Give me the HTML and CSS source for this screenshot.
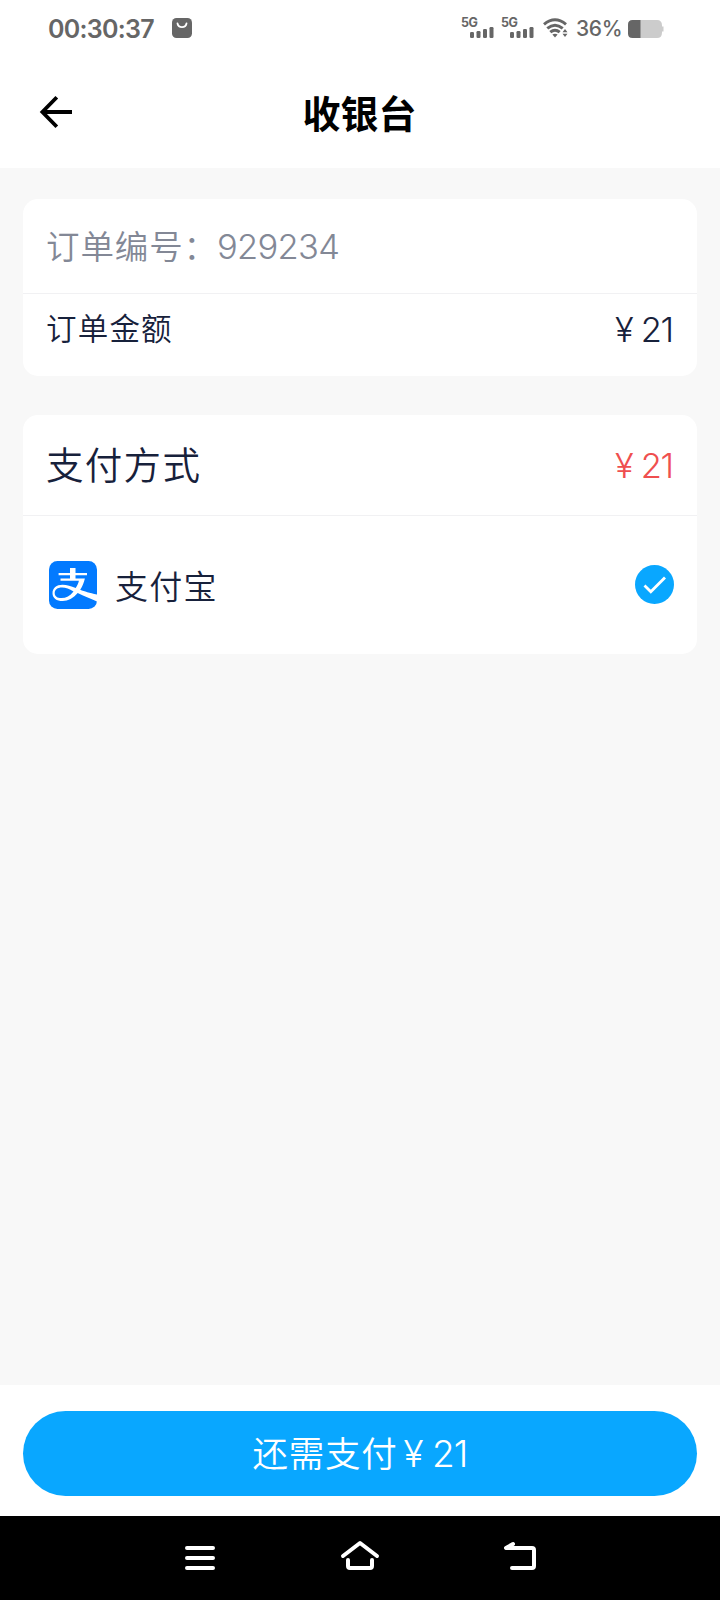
FILE: index.html
```html
<!DOCTYPE html>
<html lang="zh-CN">
<head>
    <meta charset="UTF-8">
    <title>收银台</title>
    <link rel="stylesheet" href="styles.css">
</head>
<body>
    <div class="page">
        <div class="status">
            <span class="time">00:30:37</span>
            <svg class="bag" width="20" height="20" viewBox="0 0 20 20">
                <rect width="20" height="20" rx="4.5" fill="#666"/>
                <path d="M5.5 5.5a4.6 4.6 0 0 0 9 0" fill="none" stroke="#fff" stroke-width="1.8" stroke-linecap="round"/>
            </svg>
            <div class="signal">
                <span>5G</span>
                <svg width="24" height="12" viewBox="0 0 24 12" fill="#666">
                    <rect x="0" y="6" width="4" height="6" rx="1.2"/>
                    <rect x="6.5" y="5" width="4" height="7" rx="1.2"/>
                    <rect x="13" y="3" width="4" height="9" rx="1.2"/>
                    <rect x="19.5" y="1" width="4" height="11" rx="1.2"/>
                </svg>
            </div>
            <div class="signal">
                <span>5G</span>
                <svg width="24" height="12" viewBox="0 0 24 12" fill="#666">
                    <rect x="0" y="6" width="4" height="6" rx="1.2"/>
                    <rect x="6.5" y="5" width="4" height="7" rx="1.2"/>
                    <rect x="13" y="3" width="4" height="9" rx="1.2"/>
                    <rect x="19.5" y="1" width="4" height="11" rx="1.2"/>
                </svg>
            </div>
            <svg class="wifi" width="26" height="20" viewBox="0 0 26 20">
                <g fill="none" stroke="#666" stroke-width="3">
                    <path d="M1 6.3Q12 -2.7 23 6.3"/>
                    <path d="M4.3 10.4Q12 4 19.7 10.4"/>
                    <path d="M7.3 14.2Q12 10.2 16.7 14.2"/>
                </g>
                <path d="M9.4 16.6Q12 14.8 14.6 16.6L12 19.4Z" fill="#666"/>
                <path d="M19.5 14.3L22 11l2.5 3.3zM19.5 15.7h5L22 19z" fill="#666"/>
            </svg>
            <span class="percent">36%</span>
            <svg class="battery" width="36" height="18" viewBox="0 0 36 18">
                <path d="M4.5 0H29q5 0 5 5.5v1h1.500v5H34v1q0 5.500-5 5.500H4.500z" fill="#ccc"/>
                <path d="M12.500 0H4.500Q0 0 0 4.500v9Q0 18 4.500 18h8z" fill="#666"/>
            </svg>
        </div>
        <div class="header">
            <svg class="back" width="34" height="34" viewBox="0 0 34 34" fill="none" stroke="#000" stroke-width="3.8">
                <path d="M33 17H4M17.800 2.200L3.400 17l14.400 14.800"/>
            </svg>
            <h1>收银台</h1>
        </div>

        <div class="content">
            <div class="card order">
                <div class="row number">
                    <span class="no-label">订单编号：</span><span class="no-value">929234</span>
                </div>
                <div class="row amount">
                    <span class="amount-label">订单金额</span>
                    <span class="price"><i>¥</i>21</span>
                </div>
            </div>
            <div class="card pay">
                <div class="row method">
                    <span class="method-label">支付方式</span>
                    <span class="price red"><i>¥</i>21</span>
                </div>
                <div class="row alipay">
                    <svg class="logo" width="48" height="48" viewBox="0 0 48 48">
                        <rect width="48" height="48" rx="8.500" fill="#027aff"/>
                        <path d="M21 7h5.500v5H38v2.200H26.500v3.400h9.400c-1 4.300-2.500 8-4.700 11.200 4.500 1.700 9 3.100 16.800 4.800v6.800c-7-2.500-13-5.300-19.300-8.300-4.500 5.200-9.500 8-15 8C7.500 40.100 3.500 37 3.500 32.200c0-5 4-8.400 10-8.400 4.500 0 8.500 1.300 13.200 3.200 1.500-2.200 2.600-4.500 3.200-7.200H11.500v-2.200H21v-3.400H9.600V12H21zM13 26.400c-4.500 0-7.300 2.100-7.300 5.500 0 3.200 2.500 5.200 6.800 5.200 4.600 0 8.500-2.300 12-6.700-4.200-2.500-7.500-4-11.500-4z" fill="#fff"/>
                    </svg>
                    <span class="alipay-label">支付宝</span>
                    <svg class="check" width="39" height="39" viewBox="0 0 39 39">
                        <circle cx="19.500" cy="19.500" r="19.500" fill="#09a7ff"/>
                        <path d="M9.500 20.500l6.300 6.300L30 12.400" fill="none" stroke="#fff" stroke-width="2.800"/>
                    </svg>
                </div>
            </div>
        </div>

        <div class="footer">
            <div class="btn"><span>还需支付</span><i>¥</i><b>21</b></div>
        </div>
        <div class="nav">
            <svg width="36" height="32" viewBox="0 0 36 32" fill="none" stroke="#fff" stroke-width="4" stroke-linecap="round">
                <path d="M5 8h26M5 18h26M5 28h26"/>
            </svg>
            <svg width="40" height="32" viewBox="0 0 40 32" fill="none" stroke="#fff" stroke-width="4" stroke-linecap="round" stroke-linejoin="round">
                <path d="M3 16L20 3l17 13M8 20v6q0 2 2 2h20q2 0 2-2v-6"/>
            </svg>
            <svg width="36" height="32" viewBox="0 0 36 32" fill="none" stroke="#fff" stroke-width="4" stroke-linecap="round" stroke-linejoin="round">
                <path d="M11 4L4 8h26q2 0 2 2v16q0 2-2 2H10"/>
            </svg>
        </div>
    </div>
</body>
</html>
```
FILE: styles.css
```css
*{
    padding: 0;
    margin: 0;
    box-sizing: border-box;
}

body{
    font-family: Inter, "Noto Sans CJK SC", sans-serif;
    color: #17213b;
    background: #fff;
}

i{
    font-style: normal;
}

svg{
    display: block;
    flex: none;
}

.page{
    display: flex;
    flex-direction: column;
    width: 720px;
    height: 1600px;
    overflow: hidden;
}

/* 状态栏 */
.status{
    display: flex;
    align-items: center;
    height: 56px;
    padding: 0 56px 0 48px;
    color: #666;
}

.time{
    width: 107px;
    font-size: 25px;
    font-weight: 600;
    line-height: 30px;
    letter-spacing: -0.7px;
    white-space: nowrap;
    margin-top: 2px;
}

.bag{
    margin-left: 17px;
    margin-right: auto;
}

.signal{
    width: 33px;
    height: 20px;
    margin-right: 7px;
}

.signal span{
    display: block;
    height: 8px;
    font-size: 12.5px;
    font-weight: 700;
    line-height: 10px;
    letter-spacing: -0.5px;
}

.signal svg{
    margin-left: 9px;
}

.wifi{
    margin-left: 2px;
}

.percent{
    width: 46px;
    margin: 1px 6px 0 7px;
    font-family: Inter, sans-serif;
    font-size: 21px;
    font-weight: 500;
    letter-spacing: -0.3px;
    white-space: nowrap;
}

.battery{
    margin-top: 1px;
}

/* 标题 */
.header{
    display: flex;
    align-items: center;
    height: 112px;
    padding: 0 40px 0 39px;
}

.header h1{
    flex: 1;
    padding: 3px 34px 0 0;
    text-align: center;
    font-size: 38px;
    font-weight: 700;
    line-height: 56px;
    color: #000;
}

/* 内容 */
.content{
    flex: 1;
    padding: 31px 23px 0;
    background: #f8f8f8;
}

.card{
    background: #fff;
    border-radius: 15px;
}

.order{
    height: 177px;
    margin-bottom: 39px;
}

.pay{
    height: 239px;
}

.row{
    display: flex;
    align-items: center;
    padding: 0 23px;
    white-space: nowrap;
}

.number{
    height: 95px;
    border-bottom: 1px solid #f1f1f3;
    color: #838896;
}

.no-label{
    width: 171px;
    padding-bottom: 3px;
    font-size: 33.5px;
    letter-spacing: 0.9px;
    font-weight: 350;
}

.no-value{
    font-size: 34.5px;
    font-weight: 350;
    letter-spacing: -0.7px;
}

.amount{
    height: 72px;
    justify-content: space-between;
}

.amount-label{
    padding-bottom: 6px;
    font-size: 30.5px;
    font-weight: 350;
    letter-spacing: 1.2px;
}

.price{
    display: flex;
    padding-right: 1px;
    font-size: 34.5px;
    font-weight: 350;
    line-height: 40px;
    letter-spacing: -1.2px;
}

.price i{
    letter-spacing: 0;
    margin-right: 7px;
}

.red{
    color: #ef4f4f;
}

.method{
    height: 101px;
    padding-top: 1px;
    border-bottom: 1px solid #f1f1f3;
    justify-content: space-between;
}

.method-label{
    padding-bottom: 6px;
    font-size: 37.5px;
    font-weight: 350;
    letter-spacing: 1.3px;
}

.alipay{
    height: 137px;
    padding-left: 26px;
}

.alipay-label{
    margin-left: 18px;
    margin-right: auto;
    font-size: 33px;
    font-weight: 350;
    letter-spacing: 1.2px;
}

/* 底部支付按钮 */
.footer{
    height: 131px;
    padding: 26px 23px 0;
    background: #fff;
}

.btn{
    display: flex;
    align-items: center;
    justify-content: center;
    height: 85px;
    padding-bottom: 4px;
    border-radius: 43px;
    background: #09a7ff;
    color: #fff;
    font-size: 35.5px;
    font-weight: 350;
    letter-spacing: 0.7px;
}

.btn i{
    margin-left: 6px;
    margin-right: 8px;
    padding-top: 3px;
    font-size: 37px;
}

.btn b{
    padding-top: 3px;
    font-size: 37px;
    font-weight: 350;
    letter-spacing: -1px;
}

.nav{
    display: flex;
    justify-content: center;
    height: 84px;
    padding-top: 24px;
    background: #000;
    gap: 122px;
}
```
